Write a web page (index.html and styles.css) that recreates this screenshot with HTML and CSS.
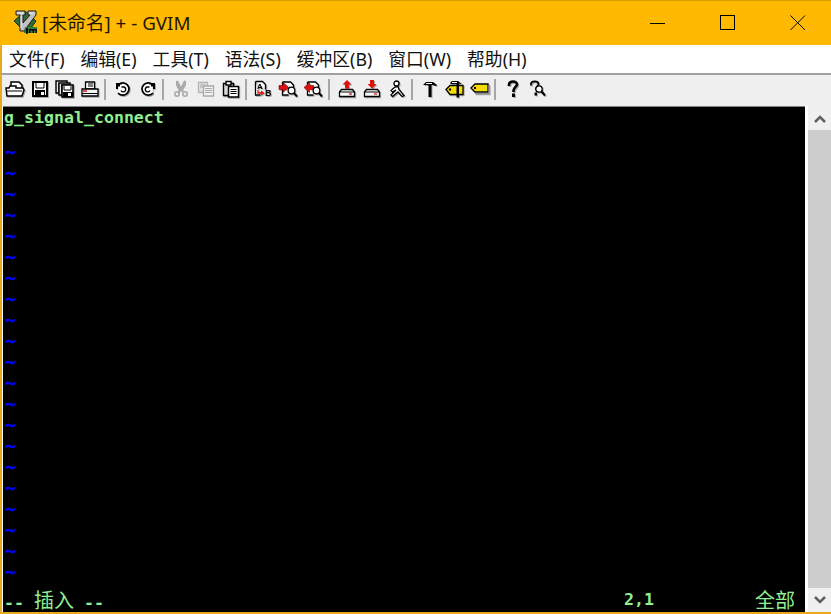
FILE: index.html
```html
<!DOCTYPE html>
<html lang="zh">
<head>
<meta charset="utf-8">
<title>[未命名] + - GVIM</title>
<link rel="stylesheet" href="styles.css">
</head>
<body>
<div class="window">
  <header class="titlebar">
    <svg class="appicon" width="25" height="25" viewBox="0 0 25 25">
      <path d="M12 1l11 10-9 13L1 11z" fill="#2f6b36" stroke="#17331a"/>
      <path d="M3 1h9v4h-2v8l7-8h-2V1h8v4L11 21H7V5H3z" fill="#c2c2c2" stroke="#1c1c1c"/>
      <path d="M8 6v12M4 3h7M16 3h5" stroke="#f2f2f2" fill="none"/>
      <path d="M12 17h12v6H11z" fill="#3a7a40"/>
      <path d="M13 18h2v5h-2zM16 19h8v1.500h-8zM16 19h1.500v4H16zM19.500 19H21v4h-1.500zM22.500 19H24v4h-1.500z" fill="#0c0c0c"/>
    </svg>
    <span class="title">[未命名] + - GVIM</span>
    <div class="controls">
      <svg width="16" height="16" viewBox="0 0 16 16"><path d="M0 8h15" stroke="#000" shape-rendering="crispEdges"/></svg>
      <svg width="16" height="16" viewBox="0 0 16 16"><rect x=".5" y=".5" width="14" height="14" fill="none" stroke="#000" shape-rendering="crispEdges"/></svg>
      <svg width="16" height="16" viewBox="0 0 16 16"><path d="M.5.5l14.500 14.500M15 .5L.5 15" stroke="#000" fill="none"/></svg>
    </div>
  </header>

  <nav class="menubar">
    <span class="menu">文件(F)</span>
    <span class="menu">编辑(E)</span>
    <span class="menu">工具(T)</span>
    <span class="menu">语法(S)</span>
    <span class="menu">缓冲区(B)</span>
    <span class="menu">窗口(W)</span>
    <span class="menu">帮助(H)</span>
  </nav>

  <div class="toolbar">
    <!-- open -->
    <span class="tool"><svg width="20" height="18" viewBox="0 0 20 18"><path d="M6 6V2h8l3 3v4" fill="#fff" stroke="#000" stroke-width="1.500"/><path d="M2 16L1 8h3l1-2h6v2h7l1 2-2 6z" fill="#fff" stroke="#000" stroke-width="1.500"/><path d="M2 11h15" stroke="#000"/></svg></span>
    <!-- save -->
    <span class="tool"><svg width="18" height="18" viewBox="0 0 18 18"><path d="M2 2h14v14H2z" fill="#fff" stroke="#000" stroke-width="2"/><path d="M4 10h10v6H4z" fill="#000"/><path d="M10 12h3v3h-3z" fill="#fff"/><path d="M5 3v5h8V3" fill="none" stroke="#000"/></svg></span>
    <!-- save all -->
    <span class="tool"><svg width="20" height="18" viewBox="0 0 20 18"><path d="M1 1h11v3H4v9H1z" fill="#e8e8e8" stroke="#000" stroke-width="1.400"/><path d="M4 3h11v2H7v10H4z" fill="#e8e8e8" stroke="#000" stroke-width="1.400"/><path d="M7 5h11v12H7z" fill="#fff" stroke="#000" stroke-width="1.600"/><path d="M8 12h10v5H8z" fill="#000"/><path d="M13 13h3v3h-3z" fill="#fff"/><path d="M9 6v4h7V6" fill="none" stroke="#000"/></svg></span>
    <!-- print -->
    <span class="tool"><svg width="20" height="18" viewBox="0 0 20 18"><path d="M5.500 2h9v7h-9z" fill="#fff" stroke="#000" stroke-width="1.300"/><path d="M8 4h5M8 6h5" stroke="#000"/><path d="M2 9h16v7H2z" fill="#f4f4f4" stroke="#000" stroke-width="1.300"/><path d="M3 11h4" stroke="#e01010" stroke-width="1.500"/><path d="M2 13.500h16" stroke="#000"/></svg></span>
    <span class="sep"></span>
    <!-- undo -->
    <span class="tool"><svg width="18" height="18" viewBox="0 0 18 18"><path d="M4.500 4.500A6.200 6.200 0 1 1 4 13" fill="#fff" stroke="#000" stroke-width="1.700"/><path d="M7.500 7H10a2.500 2.500 0 1 1-3 3.500" fill="none" stroke="#000" stroke-width="1.400"/><path d="M2 3h6v1.500H6v2H4V9H2z" fill="#000"/></svg></span>
    <!-- redo -->
    <span class="tool"><svg width="18" height="18" viewBox="0 0 18 18"><path d="M13.500 4.500A6.200 6.200 0 1 0 14 13" fill="#fff" stroke="#000" stroke-width="1.700"/><path d="M10.500 7H8a2.500 2.500 0 1 0 3 3.500" fill="none" stroke="#000" stroke-width="1.400"/><path d="M16 3h-6v1.500h2v2h2V9h2z" fill="#000"/></svg></span>
    <span class="sep"></span>
    <!-- cut (disabled) -->
    <span class="tool off"><svg width="16" height="18" viewBox="0 0 16 18"><path d="M4 1l4 8 4-8v4L9 10l1 2M4 1v4l3 6-2 2" fill="none" stroke="#a9a9a9" stroke-width="2"/><circle cx="4" cy="14" r="2.200" fill="none" stroke="#a9a9a9" stroke-width="1.600"/><circle cx="12" cy="14" r="2.200" fill="none" stroke="#a9a9a9" stroke-width="1.600"/></svg></span>
    <!-- copy (disabled) -->
    <span class="tool off"><svg width="18" height="18" viewBox="0 0 18 18"><path d="M1.500 2.500h9v10h-9z" fill="#e2e2e2" stroke="#b4b4b4" stroke-width="1.300"/><path d="M6.500 6h10v10h-10z" fill="#f4f4f4" stroke="#a9a9a9" stroke-width="1.300"/><path d="M8 8.500h7M8 10.500h7M8 12.500h7M3 5h5M3 7h3" stroke="#a9a9a9"/></svg></span>
    <!-- paste -->
    <span class="tool"><svg width="18" height="18" viewBox="0 0 18 18"><path d="M1.500 3.500h10v12h-10z" fill="#d8d8d8" stroke="#000" stroke-width="1.400"/><path d="M4 1.500h5v3.500H4z" fill="#fff" stroke="#000" stroke-width="1.400"/><path d="M6.500 6.500h10v10.500h-10z" fill="#fff" stroke="#000" stroke-width="1.500"/><path d="M8.500 9.500h6M8.500 11.500h6M8.500 13.500h6" stroke="#000"/></svg></span>
    <span class="sep"></span>
    <!-- replace -->
    <span class="tool"><svg width="19" height="18" viewBox="0 0 19 18"><path d="M1.500 1.500h7l3 3v5M1.500 1.500v13.500h5" fill="#fff" stroke="#000" stroke-width="1.300"/><text x="3" y="9" class="ib">A</text><path d="M4 10v3h4" fill="none" stroke="#e01010" stroke-width="1.300"/><path d="M7 10.500l3.500 2.500L7 15.500z" fill="#e01010"/><text x="11" y="16" class="ib big">B</text></svg></span>
    <!-- find next -->
    <span class="tool"><svg width="19" height="18" viewBox="0 0 19 18"><path d="M3.500 2h8l3 3v4M3.500 2v13h6" fill="#fff" stroke="#000" stroke-width="1.300"/><path d="M0 5.500h4V2.500l5.500 5-5.500 5v-3H0z" fill="#e01010" stroke="#7a0000" stroke-width=".6"/><circle cx="12.500" cy="10.500" r="3.300" fill="#fff" stroke="#000" stroke-width="1.200"/><path d="M15 13l3 3.500" stroke="#000" stroke-width="2"/></svg></span>
    <!-- find prev -->
    <span class="tool"><svg width="19" height="18" viewBox="0 0 19 18"><path d="M3.500 2h8l3 3v4M3.500 2v13h6" fill="#fff" stroke="#000" stroke-width="1.300"/><path d="M9.500 5.500h-4V2.500L0 7.500l5.500 5v-3h4z" fill="#e01010" stroke="#7a0000" stroke-width=".6"/><circle cx="12.500" cy="10.500" r="3.300" fill="#fff" stroke="#000" stroke-width="1.200"/><path d="M15 13l3 3.500" stroke="#000" stroke-width="2"/></svg></span>
    <span class="sep"></span>
    <!-- load session -->
    <span class="tool"><svg width="18" height="18" viewBox="0 0 18 18"><path d="M9 0l4.500 4.500H11v4H7v-4H4.500z" fill="#e01010"/><path d="M1.500 12l2-2.500h11l2 2.500v4.500h-15z" fill="#fff" stroke="#000" stroke-width="1.300"/><path d="M2 12h14" stroke="#000"/><path d="M11 14h3" stroke="#e01010" stroke-width="1.300"/></svg></span>
    <!-- save session -->
    <span class="tool"><svg width="18" height="18" viewBox="0 0 18 18"><path d="M9 8.500L4.500 4H7V0h4v4h2.500z" fill="#e01010"/><path d="M1.500 12l2-2.500h11l2 2.500v4.500h-15z" fill="#fff" stroke="#000" stroke-width="1.300"/><path d="M2 12h14" stroke="#000"/><path d="M11 14h3" stroke="#e01010" stroke-width="1.300"/></svg></span>
    <!-- run -->
    <span class="tool"><svg width="16" height="18" viewBox="0 0 16 18"><circle cx="7.500" cy="3.500" r="2.500" fill="#fff" stroke="#000" stroke-width="1.300"/><path d="M6 7L2 10.500l1.500 1.500L7 10 2 15l1.500 1.500L9 12l4 4.500 2-1-5-6-1-3z" fill="#fff" stroke="#000" stroke-width="1.300"/></svg></span>
    <span class="sep"></span>
    <!-- make -->
    <span class="tool"><svg width="16" height="18" viewBox="0 0 16 18"><path d="M1 5l3-3h7l4 3-1 1-3-1H9.500v12h-3V5H3z" fill="#000"/><path d="M4 3.500h6" stroke="#fff"/></svg></span>
    <!-- tags -->
    <span class="tool"><svg width="20" height="18" viewBox="0 0 20 18"><path d="M1 9.500l4-4h13v9H5z" fill="#f5dc00" stroke="#000" stroke-width="1.300"/><circle cx="5" cy="9.500" r="1.200" fill="#000"/><path d="M5 3l2-2h6l4 3-3-.5v14h-2.500V4H6z" fill="#000"/><path d="M7 2.500h5" stroke="#fff"/></svg></span>
    <!-- jump -->
    <span class="tool"><svg width="20" height="18" viewBox="0 0 20 18"><path d="M1 8l4-4h13v8H5z" fill="#f5dc00" stroke="#000" stroke-width="1.300"/><path d="M5 13.500h14V5" fill="none" stroke="#8a8a8a" stroke-width="1.300"/><path d="M4 7h2v2H4z" fill="#000"/></svg></span>
    <span class="sep"></span>
    <!-- help -->
    <span class="tool"><svg width="12" height="18" viewBox="0 0 12 18"><path d="M2 6V4.500a4 3 0 0 1 8 0c0 2-3.500 3-3.500 6V12" fill="none" stroke="#000" stroke-width="2.600"/><path d="M5 13.500h3V17H5z" fill="#000"/></svg></span>
    <!-- find help -->
    <span class="tool"><svg width="18" height="18" viewBox="0 0 18 18"><path d="M2 5.500V4a3.500 2.500 0 0 1 7.500 0c0 2-2.500 3-2.500 5v1" fill="none" stroke="#000" stroke-width="1.800"/><path d="M5.500 12.500h2.500v3H5.500z" fill="#000"/><circle cx="10" cy="9" r="3.200" fill="#fff" stroke="#000" stroke-width="1.300"/><path d="M12.500 11.500L16 15.500" stroke="#000" stroke-width="2"/></svg></span>
  </div>

  <div class="content">
    <main class="editor">
      <div class="row">g_signal_connect</div>
      <div class="row"></div>
      <div class="row tilde">~</div><div class="row tilde">~</div><div class="row tilde">~</div><div class="row tilde">~</div>
      <div class="row tilde">~</div><div class="row tilde">~</div><div class="row tilde">~</div><div class="row tilde">~</div>
      <div class="row tilde">~</div><div class="row tilde">~</div><div class="row tilde">~</div><div class="row tilde">~</div>
      <div class="row tilde">~</div><div class="row tilde">~</div><div class="row tilde">~</div><div class="row tilde">~</div>
      <div class="row tilde">~</div><div class="row tilde">~</div><div class="row tilde">~</div><div class="row tilde">~</div>
      <div class="row tilde">~</div>
      <div class="row status">
        <span class="mode">-- <span class="cjk">插入</span> --</span>
        <span class="pos">2,1</span>
        <span class="cjk all">全部</span>
      </div>
    </main>
    <aside class="scrollbar">
      <div class="arrow"><svg width="12" height="9" viewBox="0 0 12 9"><path d="M1 8l5-5 5 5" fill="none" stroke="#606060" stroke-width="2.500"/></svg></div>
      <div class="thumb"></div>
      <div class="arrow"><svg width="12" height="9" viewBox="0 0 12 9"><path d="M1 1l5 5 5-5" fill="none" stroke="#606060" stroke-width="2.500"/></svg></div>
    </aside>
  </div>
</div>
</body>
</html>
```
FILE: styles.css
```css
html, body {
  margin: 0;
  padding: 0;
  height: 100%;
  overflow: hidden;
  background: #f0f0f0;
}
.window {
  width: 831px;
  height: 614px;
  display: flex;
  flex-direction: column;
  box-sizing: border-box;
  font-family: "Noto Sans", "Noto Sans CJK SC", sans-serif;
  color: #000;
}
.titlebar {
  height: 45px;
  flex: none;
  background: #ffb900;
  border-top: 1px solid #d99e05;
  box-sizing: border-box;
  display: flex;
  align-items: center;
  padding-left: 13px;
  padding-right: 25px;
}
.appicon { flex: none; margin-right: 5px; margin-top: -2px; }
.title { font-size: 18.8px; color: #1e1600; white-space: nowrap; margin-top: -3px; margin-left: -1px; }
.controls { margin-left: auto; display: flex; align-items: center; gap: 54px; }
.controls svg { display: block; }
.menubar {
  height: 28px;
  flex: none;
  background: #fff;
  display: flex;
  align-items: center;
  gap: 16px;
  font-size: 17.8px;
  border-left: 2px solid #e9a91d;
  box-sizing: border-box;
  padding-left: 7px;
  padding-bottom: 2px;
}
.menu { white-space: nowrap; color: #111; }
.toolbar {
  height: 33px;
  flex: none;
  box-sizing: border-box;
  background: #efefef;
  border-top: 2px solid #a0a0a0;
  border-left: 2px solid #e9a91d;
  display: flex;
  align-items: center;
  padding-bottom: 3px;
}
.tool {
  width: 25px;
  height: 20px;
  flex: none;
  display: flex;
  align-items: center;
  justify-content: center;
}
.tool svg { display: block; filter: drop-shadow(1px 1px 0 #a8a8a8); overflow: visible; }
.tool.off svg { filter: none; }
.ib { font: bold 8px "Liberation Sans", sans-serif; fill: #000; }
.ib.big { font-size: 9px; }
.sep {
  width: 8px;
  height: 21px;
  flex: none;
  box-sizing: border-box;
  border-left: 2px solid #a6a6a6;
  margin-left: 2px;
  margin-right: -2px;
}
.content {
  flex: 1;
  min-height: 0;
  display: flex;
  background: #fff;
  border-left: 2px solid #e9a91d;
  border-bottom: 2px solid #e9a91d;
  box-sizing: border-box;
}
.editor {
  width: 802px;
  flex: none;
  margin-left: 1px;
  background: #000;
  border-top: 1px solid #808080;
  box-sizing: border-box;
  padding-left: 1px;
  font-family: "DejaVu Sans Mono", monospace;
  font-weight: bold;
  font-size: 16.6px;
  color: #90ee90;
}
.row {
  height: 21px;
  line-height: 21px;
  white-space: pre;
}
.tilde {
  color: #0000ff;
  font-size: 18px;
  transform: translate(1px, -8px);
  -webkit-text-stroke: .3px #0000ff;
}
.status { display: flex; line-height: 19px; padding-right: 10px; }
.mode { width: 620px; }
.pos { width: 131px; }
.cjk { font-family: "Noto Sans CJK SC", sans-serif; font-weight: 400; font-size: 20px; }
.scrollbar {
  width: 24px;
  flex: none;
  margin-left: 3px;
  background: #f0f0f0;
  display: flex;
  flex-direction: column;
}
.arrow {
  height: 24px;
  flex: none;
  display: flex;
  align-items: center;
  justify-content: center;
}
.thumb { flex: 1; background: #cdcdcd; }
```
